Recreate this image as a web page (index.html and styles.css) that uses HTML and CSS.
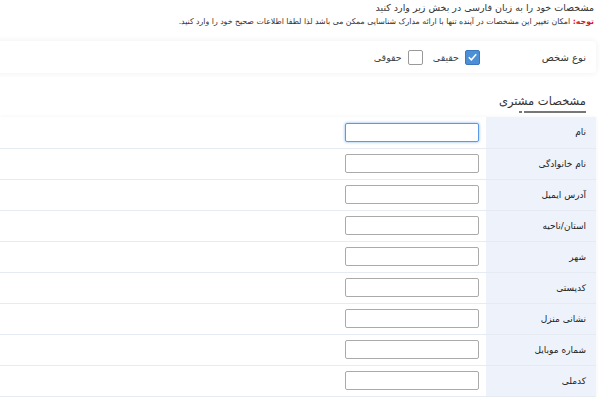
FILE: index.html
```html
<!DOCTYPE html>
<html lang="fa" dir="rtl">
<head>
    <meta charset="UTF-8">
    <title>مشخصات مشتری</title>
    <link rel="stylesheet" href="styles.css">
</head>
<body>

    <div class="notice">
        <p>مشخصات خود را به زبان فارسی در بخش زیر وارد کنید</p>
        <p class="small"><span class="warn">توجه:</span> امکان تغییر این مشخصات در آینده تنها با ارائه مدارک شناسایی ممکن می باشد لذا لطفا اطلاعات صحیح خود را وارد کنید.</p>
    </div>

    <div class="card type-row">
        <span class="type-label">نوع شخص</span>
        <label class="opt"><span class="box checked"><svg viewBox="0 0 14 14" width="14" height="14"><path d="M3 7.2 L5.8 10 L11 4" fill="none" stroke="#fff" stroke-width="1.6"/></svg></span>حقیقی</label>
        <label class="opt"><span class="box"></span>حقوقی</label>
    </div>

    <h3 class="title">مشخصات مشتری</h3>
    <div class="underline"><span class="bar"></span><span class="dot"></span></div>

    <table class="info">
        <tr><th>نام</th><td><input type="text" class="focus"></td></tr>
        <tr><th>نام خانوادگی</th><td><input type="text"></td></tr>
        <tr><th>آدرس ایمیل</th><td><input type="text"></td></tr>
        <tr><th>استان/ناحیه</th><td><input type="text"></td></tr>
        <tr><th>شهر</th><td><input type="text"></td></tr>
        <tr><th>کدپستی</th><td><input type="text"></td></tr>
        <tr><th>نشانی منزل</th><td><input type="text"></td></tr>
        <tr><th>شماره موبایل</th><td><input type="text"></td></tr>
        <tr><th>کدملی</th><td><input type="text"></td></tr>
    </table>

</body>
</html>
```

FILE: styles.css
```css
body { margin: 0; padding: 0 4px 0 0; font-family: "DejaVu Sans", sans-serif; font-size: 10px; color: #333; background: #fff; }
.notice { padding: 1px 2px 0 0; }
.notice p { margin: 0; line-height: 14px; font-size: 9.5px; }
.notice p.small { font-size: 7.8px; }
.warn { color: #e0141e; font-weight: bold; }

.card { margin: 12px 0 0 -10px; background: #fff; box-shadow: 0 0 6px rgba(0, 0, 0, 0.07); border-radius: 4px; }
.type-row { display: flex; align-items: center; height: 32px; padding-right: 10px; }
.type-label { width: 106px; font-size: 10px; color: #333; }
.opt { display: flex; align-items: center; gap: 6px; margin-left: 10px; font-size: 9.5px; color: #444; }
.box { width: 13px; height: 13px; border: 1px solid #999; border-radius: 2px; background: #fff; display: flex; align-items: center; justify-content: center; }
.box.checked { background: #4d8fd6; border-color: #3b78bd; }

.title { margin: 20px 10px 0 0; font-size: 11.5px; font-weight: normal; color: #333; line-height: 16px; }
.underline { display: flex; align-items: center; gap: 2px; margin: 1px 10px 0 0; height: 4px; }
.bar { width: 62px; height: 2px; background: #777; }
.dot { width: 3px; height: 2px; background: #777; }

.info { width: 100%; border-collapse: collapse; margin-top: 3px; box-shadow: 0 0 4px rgba(0, 0, 0, 0.05); }
.info tr { height: 31px; border-bottom: 1px solid #e6ebf3; }
.info th { width: 90px; padding: 0 10px; background: #eef3fb; font-weight: normal; text-align: right; font-size: 9px; color: #222; }
.info td { padding: 0 7px 0 0; text-align: right; }
.info input { width: 134px; height: 19px; box-sizing: border-box; border: 1px solid #aaa; border-radius: 2px; margin: 0; padding: 0 4px; display: block; }
.info input.focus { border-color: #5b9be6; box-shadow: 0 0 3px #7ab0ef; }
```
